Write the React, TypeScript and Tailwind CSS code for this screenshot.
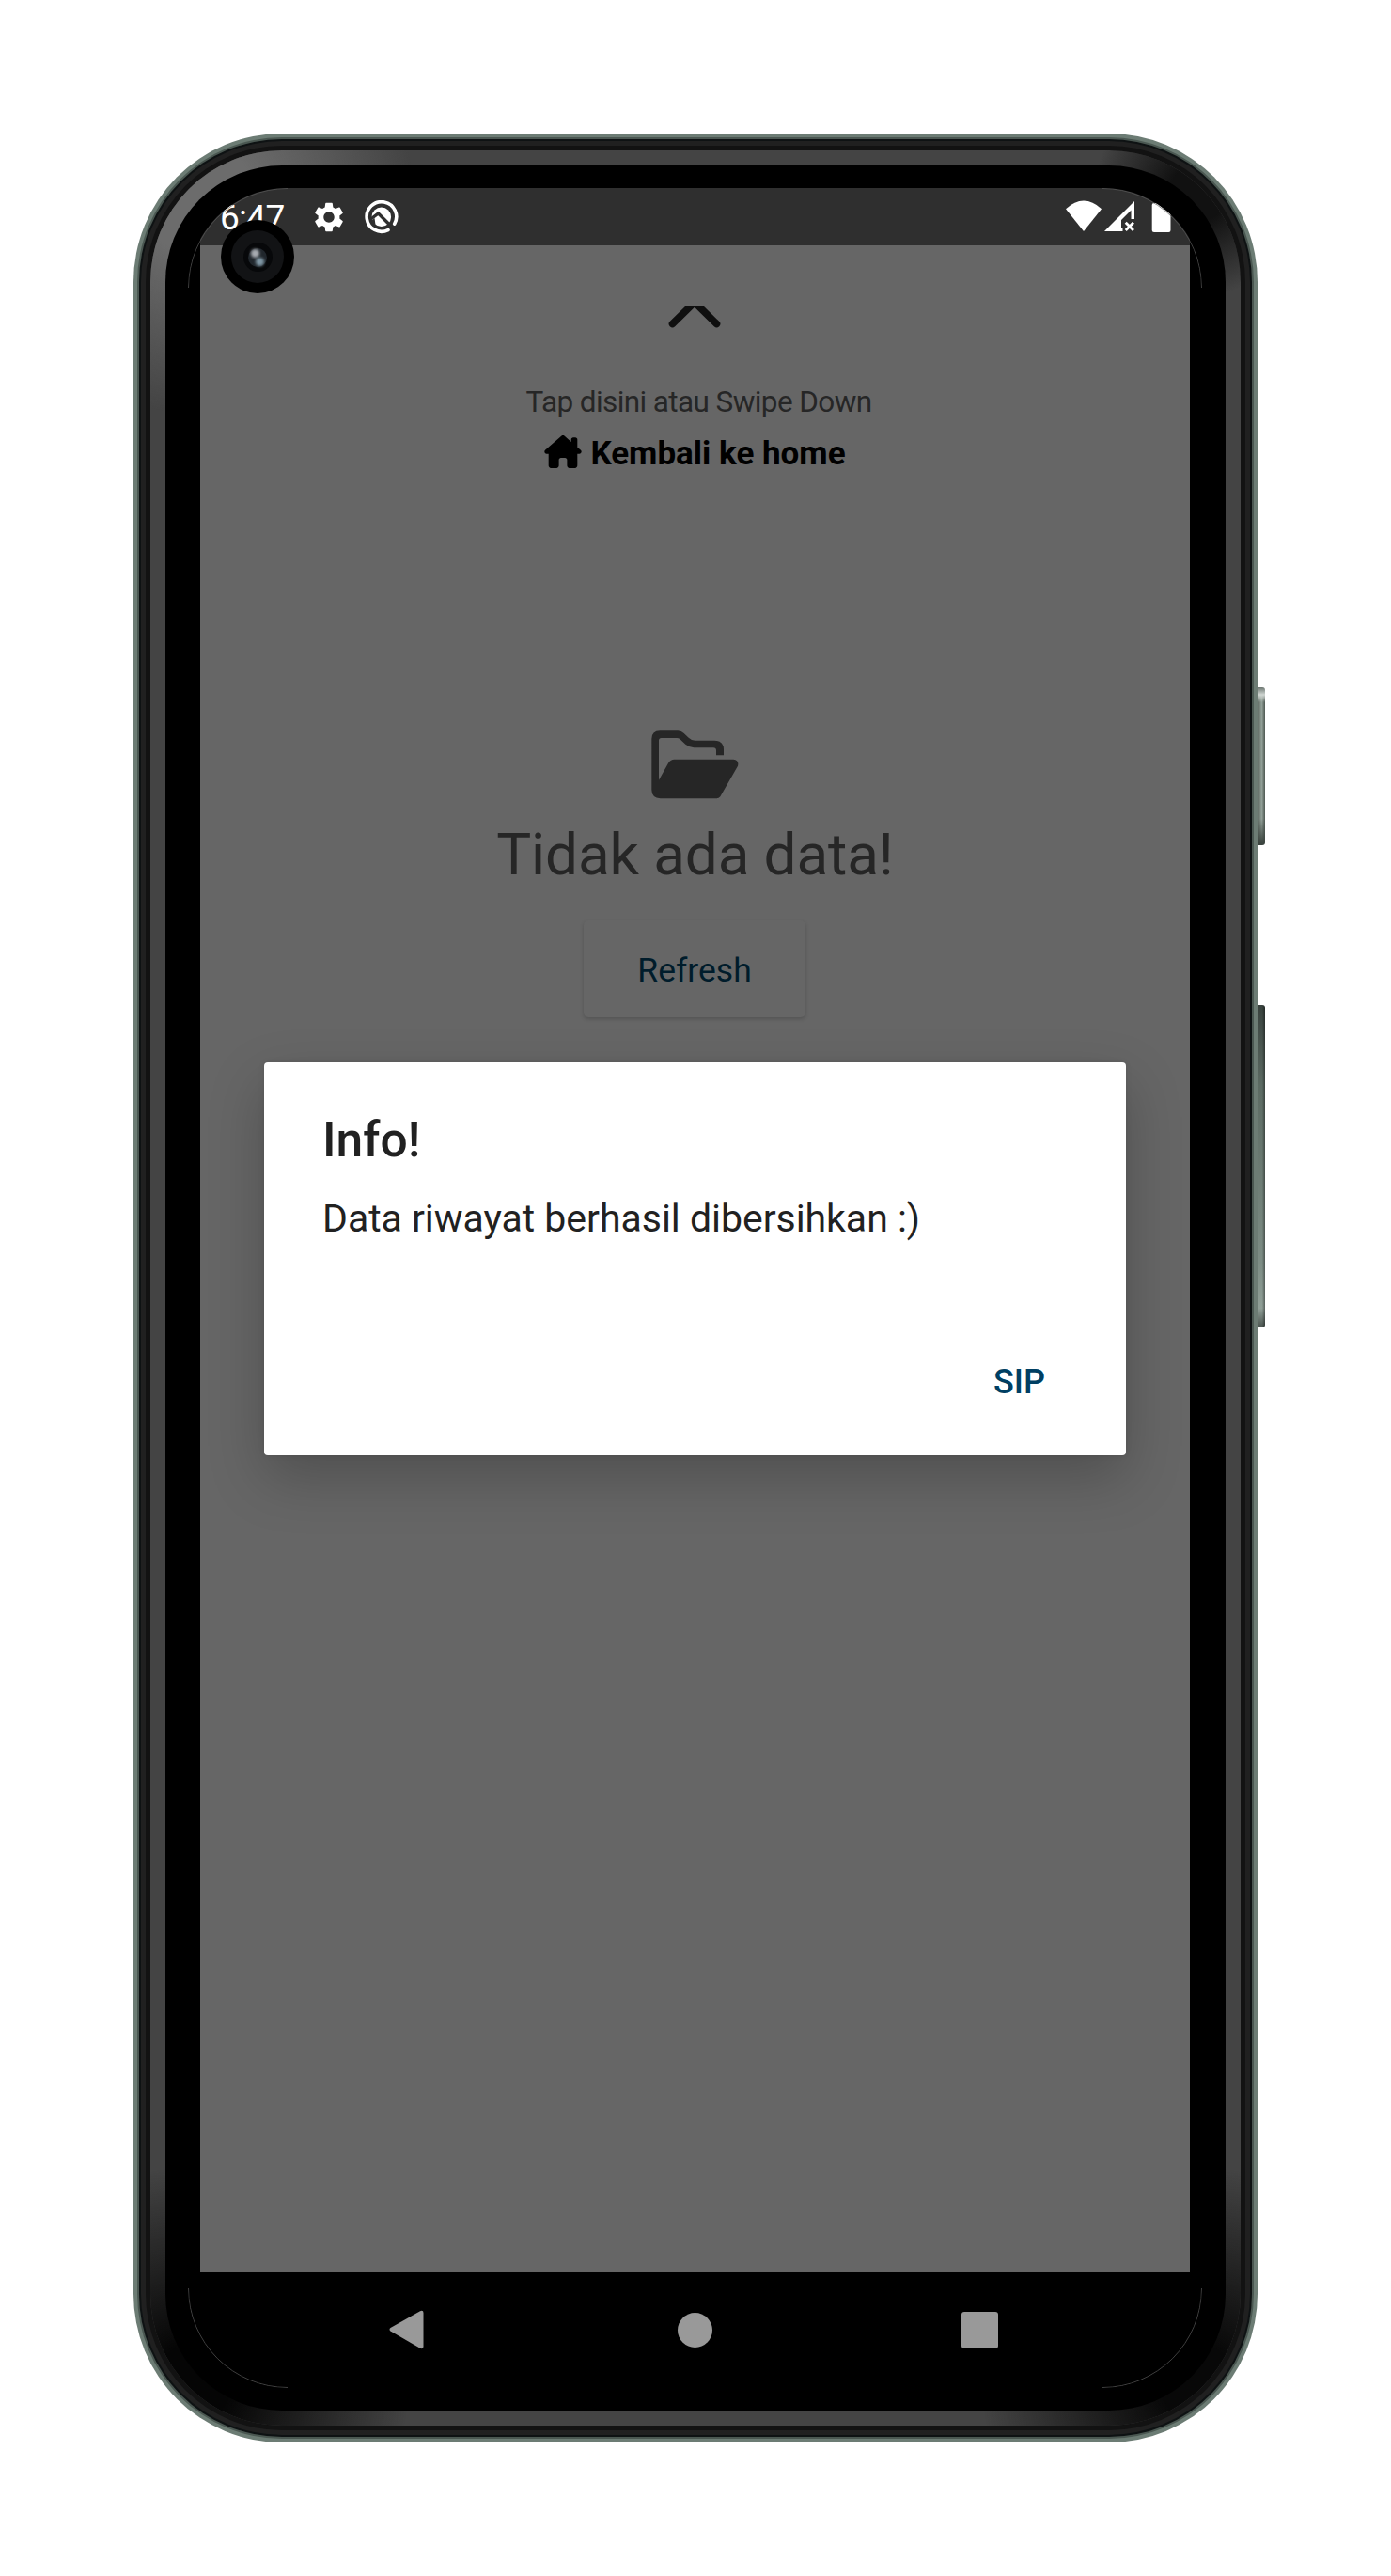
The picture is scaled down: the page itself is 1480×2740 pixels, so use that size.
import { FaHouseChimney } from "react-icons/fa6";
import { MdSettings } from "react-icons/md";

const font = "font-['Roboto','Liberation_Sans',sans-serif]";

function FolderIcon() {
  return (
    <svg viewBox="575 76 285 225" className="mr-[1px] mt-[273px] block h-[75px] w-[95px] shrink-0 fill-[#262626]">
      <path d="M579 106Q579 80 606 80H663Q674 80 682 88L697 102Q706 111 718 111H780Q809 113 809 140V158H785V143Q785 134 776 134H714Q698 132 687 123L668 105Q665 103 660 103H610Q602 103 602 111V237L633 182Q640 171 651 171H840Q859 174 854 192L798 290Q794 296 785 296H607Q579 294 579 268Z" />
    </svg>
  );
}

function StatusBar() {
  return (
    <div className="flex h-[61px] shrink-0 items-start bg-[#2f2f2f] text-white">
      <div className="ml-[21px] mt-[10px] w-[70px] whitespace-nowrap text-[37px] leading-[44px] tracking-[-0.7px]">6:47</div>
      <MdSettings className="ml-[27px] mt-[12px] size-[38px]" />
      <svg viewBox="0 0 36 36" className="ml-[19px] mt-[13px] size-[36px]">
        <path d="M25 31.600A15.800 15.800 0 1 1 31.700 25.200" fill="none" stroke="#fff" strokeWidth="3.6" strokeLinecap="round" />
        <circle cx="17.8" cy="17.8" r="10.3" fill="#fff" />
        <path d="M6 20.500L14.500 14L31 30.500" fill="none" stroke="#2f2f2f" strokeWidth="3.4" />
        <path d="M7 22L10.500 19L11.500 26L8 25Z" fill="#2f2f2f" />
      </svg>
      <div className="ml-auto mr-[20px] mt-[12px] flex">
        <svg viewBox="0 0 38 34" className="mt-[1px] h-[34px] w-[38px]">
          <path d="M0 9.2Q19-8 38 9.2L19 33Z" fill="#fff" />
        </svg>
        <svg viewBox="0 0 33 33" className="ml-[3px] mt-[2px] size-[33px]">
          <path d="M0 32L32 0V19H28.5V9.5L18 20V28L19.5 29V32Z" fill="#fff" />
          <path d="M22.7 22.7L31 31M31 22.7L22.7 31" stroke="#fff" strokeWidth="2.8" />
        </svg>
        <svg viewBox="0 0 21 36" className="ml-[17px] h-[36px] w-[21px]">
          <path d="M6 0H15V4H18.5Q20.5 4 20.5 6V33Q20.5 35 18.5 35H3Q.7 35 .7 33V6Q.7 4 3 4H6Z" fill="#fff" />
        </svg>
      </div>
    </div>
  );
}

function Dialog() {
  return (
    <div className="absolute left-[68px] top-[930px] flex h-[418px] w-[917px] flex-col rounded-[4px] bg-white pl-[62px] pr-[64px] shadow-[0_24px_60px_rgba(0,0,0,0.22),0_0_6px_rgba(0,0,0,0.1)]">
      <h2 className="mt-[53px] whitespace-nowrap text-[51.500px] font-medium leading-[60px] text-[#212121]">Info!</h2>
      <p className="mt-[29px] whitespace-nowrap text-[41px] leading-[48px] tracking-[-0.03px] text-[#212121]">Data riwayat berhasil dibersihkan :)</p>
      <button className="mr-[22px] mt-[129px] self-end text-[36px] font-medium leading-[42px] text-[#003f63]">SIP</button>
    </div>
  );
}

function NavBar() {
  return (
    <div className="flex h-[123px] shrink-0 items-start bg-black">
      <svg viewBox="0 0 37 42" className="ml-[201px] mt-[40px] h-[42px] w-[37px]">
        <path d="M1.5 19L33 1.2Q36.500 0 36.500 3V39Q36.500 42 33 40.800L1.500 22.500Q-.5 20.700 1.500 19Z" fill="#999" />
      </svg>
      <div className="ml-[270px] mt-[43px] size-[37px] rounded-full bg-[#999]" />
      <div className="ml-[265px] mt-[42px] size-[39px] rounded-[3px] bg-[#999]" />
    </div>
  );
}

function GlassCorners() {
  return (
    <svg viewBox="0 0 1079 2340" className="pointer-events-none absolute inset-0 h-full w-full" fill="none" stroke="#5a5a5a" strokeWidth="0.7">
      <path d="M.5 106A105.500 105.500 0 0 1 106 .5" />
      <path d="M973 .5A105.500 105.500 0 0 1 1078.500 106" />
      <path d="M.5 2234A105.500 105.500 0 0 0 106 2339.500" />
      <path d="M973 2339.500A105.500 105.500 0 0 0 1078.500 2234" />
    </svg>
  );
}

function Screen() {
  return (
    <div className="relative h-[2340px] w-[1079px] overflow-hidden rounded-[105px] bg-black px-[13px]">
      <div className="relative flex h-full w-[1053px] flex-col">
        <StatusBar />
        <main className="flex h-[2156px] shrink-0 flex-col items-center bg-[#666]">
          <svg viewBox="0 0 56 26" className="mr-[1px] mt-[64px] block h-[26px] w-[56px] shrink-0">
            <path d="M4.500 19.500L28-3.500L51.500 19.500" fill="none" stroke="#0f0f0f" strokeWidth="7.6" strokeLinecap="round" />
          </svg>
          <p className="ml-[8px] mt-[58px] whitespace-nowrap text-[31.500px] leading-[38px] tracking-[-0.600px] text-[#262626]">Tap disini atau Swipe Down</p>
          <div className="mt-[16px] flex items-start text-black">
            <FaHouseChimney className="h-[35px] w-[40px]" />
            <span className="ml-[9px] whitespace-nowrap text-[35px] font-bold leading-[40px]">Kembali ke home</span>
          </div>
          <FolderIcon />
          <h1 className="mt-[22px] whitespace-nowrap text-[62px] leading-[72px] tracking-[-0.100px] text-[#262626]">Tidak ada data!</h1>
          <button className="mr-[1px] mt-[34px] h-[103px] w-[236px] rounded-[5px] bg-[#666] pt-[3px] text-[35.500px] leading-[42px] text-[#001c2b] shadow-[0_2px_4px_rgba(0,0,0,0.18)]">Refresh</button>
        </main>
        <NavBar />
        <Dialog />
      </div>
      <GlassCorners />
    </div>
  );
}

function Camera() {
  return (
    <div className="absolute left-[93px] top-[92px] flex size-[78px] items-center justify-center rounded-full bg-black">
      <div className="flex size-[56px] items-center justify-center rounded-full bg-[#121315]">
        <div className="relative size-[31px] rounded-full bg-[#07080a]">
          <div className="absolute left-[5px] top-[6px] size-[20px] rounded-full bg-[#20262c]" />
          <div className="absolute left-[8px] top-[7px] size-[9px] rounded-full bg-[#a7abb1] blur-[1.5px]" />
          <div className="absolute left-[13px] top-[16px] size-[9px] rounded-full bg-[#7f97a5] blur-[1.5px]" />
        </div>
      </div>
    </div>
  );
}

export default function App() {
  return (
    <div className={`flex h-[2740px] w-[1480px] justify-center overflow-hidden bg-white pt-[142px] ${font}`}>
      <div className="relative h-[2456px] w-[1196px]">
        <div className="absolute left-[1196px] top-[589px] h-[168px] w-[8px] rounded-r-[3px] bg-[linear-gradient(180deg,#6b7570_0,#d0d6d2_8px,transparent_16px,transparent_140px,#3c4540_166px),linear-gradient(90deg,#56605a,#93a199_55%,#4d5751)]" />
        <div className="absolute left-[1196px] top-[927px] h-[343px] w-[8px] rounded-r-[3px] bg-[linear-gradient(90deg,#0000_60%,#0006),linear-gradient(180deg,#39423e,#5c6b63_25%,#7d8d85_80%,#909f97_94%,#4a544f)]" />
        <div className="h-full w-full rounded-[158px] bg-[#6c7c74] p-[4px]">
          <div className="h-full w-full rounded-[154px] bg-[#4a5751] p-[2px]">
            <div className="h-full w-full rounded-[152px] bg-[#0e1213] p-[2px]">
              <div className="h-full w-full rounded-[150px] bg-[#202020] p-[5px]">
                <div className="h-full w-full rounded-[145px] bg-[#121212] p-[5px]">
                  <div className="relative h-full w-full rounded-[140px] bg-[#444] p-[16px]">
                    <div className="absolute inset-0 rounded-[140px] bg-[radial-gradient(circle_at_50px_50px,#6c6c6c_60px,transparent_230px),radial-gradient(circle_at_1115px_45px,#111_30px,transparent_110px),radial-gradient(circle_at_45px_2375px,#050505_40px,transparent_230px),radial-gradient(circle_at_1115px_2375px,#080808_40px,transparent_230px)]" />
                    <div className="relative h-full w-full rounded-[124px] bg-black px-[24px] pt-[24px]">
                      <Screen />
                    </div>
                  </div>
                </div>
              </div>
            </div>
          </div>
        </div>
        <Camera />
      </div>
    </div>
  );
}
